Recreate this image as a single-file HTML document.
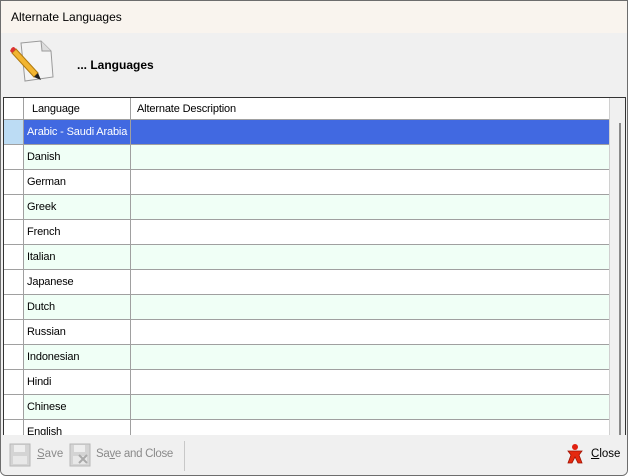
<!DOCTYPE html>
<html><head><style>
body{margin:0;width:628px;height:476px;overflow:hidden;background:#fff;font-family:"Liberation Sans",sans-serif;}
.win{position:absolute;left:0;top:0;width:626px;height:474px;border:1px solid #6d6d6d;border-radius:0 0 6px 6px;background:#f0f0f0;overflow:hidden}
.title{position:absolute;left:0;top:0;width:626px;height:32px;background:#f9f4ee;font-size:12px;color:#000;line-height:32px;text-indent:10px}
.hdr{position:absolute;left:76px;top:57px;font-size:12px;font-weight:bold}
.grid{position:absolute;left:2px;top:96px;width:621px;height:337px;border:1px solid #333;background:#fff;overflow:hidden}
.row{position:absolute;left:0;width:605px;height:24px;border-bottom:1px solid #a0a0a0;font-size:11px;letter-spacing:-0.15px}
.rh{position:absolute;left:0;top:0;width:19px;height:24px;border-right:1px solid #a0a0a0;background:#fff}
.c1{position:absolute;left:20px;top:0;width:103px;height:24px;border-right:1px solid #a0a0a0;line-height:25px;padding-left:3px}
.c2{position:absolute;left:127px;top:0;width:478px;height:24px}
.alt .c1,.alt .c2{background:#f0fff6}
.sb{position:absolute;left:605px;top:0;width:16px;height:337px;background:#f0f0f0;border-left:1px solid #d0d0d0}
.thumb{position:absolute;left:9px;top:25px;width:2px;height:320px;background:#8a8a8a}
.bot{position:absolute;left:0;top:434px;width:626px;height:40px;background:#f0f0f0;font-size:11.5px;color:#8a8a8a}
u{text-decoration:underline}
</style></head><body>
<div class="win">
<div class="title">Alternate Languages</div>
<svg style="position:absolute;left:8px;top:38px" width="46" height="46" viewBox="0 0 46 46">
<path d="M12 4 L32 2 L42 12 L44 38 L16 42 Z" fill="#f4f4f4" stroke="#9a9a9a"/>
<path d="M32 2 L33 12 L42 12" fill="#ddd" stroke="#9a9a9a"/>
<path d="M7 10 L29 34 L25 38 L3 14 Z" fill="#f2b531" stroke="#b07a10"/>
<path d="M3 14 L7 10 L5 8 Q3 8 2 10 L1 12Z" fill="#d33"/>
<path d="M25 38 L29 34 L32 41Z" fill="#222"/>
</svg>
<div class="hdr">... Languages</div>
<div class="grid">
<div class="row" style="top:0;height:21px"><div class="rh" style="height:21px"></div><div class="c1" style="height:21px;line-height:22px;padding-left:8px;width:98px">Language</div><div class="c2" style="padding-left:6px;line-height:22px">Alternate Description</div></div>
<div class="row" style="top:22px"><div class="rh" style="background:#bcdcf4"></div><div class="c1" style="background:#4169e1;color:#fff">Arabic - Saudi Arabia</div><div class="c2" style="background:#4169e1"></div></div>
<div class="row alt" style="top:47px"><div class="rh"></div><div class="c1">Danish</div><div class="c2"></div></div>
<div class="row" style="top:72px"><div class="rh"></div><div class="c1">German</div><div class="c2"></div></div>
<div class="row alt" style="top:97px"><div class="rh"></div><div class="c1">Greek</div><div class="c2"></div></div>
<div class="row" style="top:122px"><div class="rh"></div><div class="c1">French</div><div class="c2"></div></div>
<div class="row alt" style="top:147px"><div class="rh"></div><div class="c1">Italian</div><div class="c2"></div></div>
<div class="row" style="top:172px"><div class="rh"></div><div class="c1">Japanese</div><div class="c2"></div></div>
<div class="row alt" style="top:197px"><div class="rh"></div><div class="c1">Dutch</div><div class="c2"></div></div>
<div class="row" style="top:222px"><div class="rh"></div><div class="c1">Russian</div><div class="c2"></div></div>
<div class="row alt" style="top:247px"><div class="rh"></div><div class="c1">Indonesian</div><div class="c2"></div></div>
<div class="row" style="top:272px"><div class="rh"></div><div class="c1">Hindi</div><div class="c2"></div></div>
<div class="row alt" style="top:297px"><div class="rh"></div><div class="c1">Chinese</div><div class="c2"></div></div>
<div class="row" style="top:322px"><div class="rh"></div><div class="c1">English</div><div class="c2"></div></div>
<div class="sb"><div class="thumb"></div></div>
</div>
<div class="bot">
<svg style="position:absolute;left:8px;top:8px" width="22" height="24"><rect x="1" y="1" width="20" height="22" fill="#d4d4d4" stroke="#b8b8b8"/><rect x="5" y="2" width="11" height="7" fill="#eee"/><rect x="4" y="13" width="14" height="8" fill="#e8e8e8"/></svg>
<span style="position:absolute;left:36px;top:13px"><u>S</u>ave</span>
<svg style="position:absolute;left:68px;top:8px" width="22" height="24"><rect x="1" y="1" width="20" height="22" fill="#d4d4d4" stroke="#b8b8b8"/><rect x="5" y="2" width="11" height="7" fill="#eee"/><rect x="4" y="13" width="14" height="8" fill="#e8e8e8"/><path d="M10 12 L18 20 M18 12 L10 20" stroke="#aaa" stroke-width="2"/></svg>
<span style="position:absolute;left:95px;top:13px;letter-spacing:-0.3px">Sa<u>v</u>e and Close</span>
<div style="position:absolute;left:183px;top:6px;width:1px;height:30px;background:#c8c8c8"></div>
<svg style="position:absolute;left:564px;top:8px" width="20" height="22" viewBox="0 0 20 22"><circle cx="10" cy="4" r="3" fill="#e02010"/><path d="M3 8 L17 8 L14 12 L17 20 L13 20 L10 14 L7 20 L3 20 L6 12 Z" fill="#e52a10" stroke="#a01000" stroke-width=".8"/></svg>
<span style="position:absolute;left:590px;top:13px;color:#000"><u>C</u>lose</span>
</div>
</div>
</body></html>
